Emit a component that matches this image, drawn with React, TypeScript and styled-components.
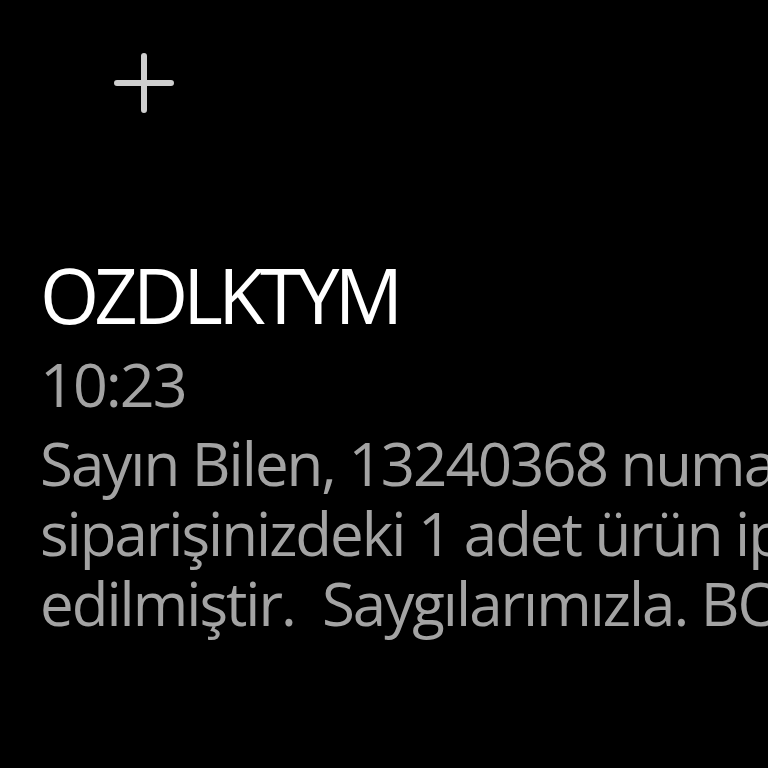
import React from "react";
import styled, { createGlobalStyle } from "styled-components";

const GlobalStyle = createGlobalStyle`
  html, body {
    margin: 0;
    padding: 0;
    background: #000;
  }
  body {
    font-family: "Open Sans", "Noto Sans", sans-serif;
  }
`;

const Screen = styled.div`
  width: 768px;
  height: 768px;
  background: #000;
  overflow: hidden;
  display: flex;
  flex-direction: column;
`;

const TopBar = styled.div`
  height: 166px;
  display: flex;
  align-items: center;
  padding-left: 112px;
`;

const AddButton = styled.button`
  width: 64px;
  height: 64px;
  padding: 0;
  border: none;
  background: transparent;
  display: flex;
  align-items: center;
  justify-content: center;
  color: #cfcfcf;
`;

const Body = styled.div`
  padding: 84px 0 0 40px;
  display: flex;
  flex-direction: column;
`;

const Sender = styled.div`
  color: #fff;
  font-size: 76px;
  font-weight: 500;
  line-height: 90px;
  letter-spacing: -4.8px;
  white-space: nowrap;
`;

const Time = styled.div`
  margin-top: 4px;
  color: #a3a3a3;
  font-size: 61px;
  font-weight: 500;
  line-height: 80px;
  letter-spacing: -2px;
`;

const Message = styled.div`
  margin-top: 4px;
  color: #a3a3a3;
  font-size: 60px;
  font-weight: 500;
  line-height: 70px;
  letter-spacing: -2px;
  white-space: pre;
`;

const lines = [
  "Sayın Bilen, 13240368 numaralı",
  "siparişinizdeki 1 adet ürün iptal",
  "edilmiştir.  Saygılarımızla. BOYNER",
];

export default function App() {
  return (
    <Screen>
      <GlobalStyle />
      <TopBar>
        <AddButton aria-label="Ekle">
          <svg width="60" height="60" viewBox="0 0 60 60" fill="none">
            <path
              d="M30 3v54M3 30h54"
              stroke="currentColor"
              strokeWidth="6"
              strokeLinecap="round"
            />
          </svg>
        </AddButton>
      </TopBar>
      <Body>
        <Sender>OZDLKTYM</Sender>
        <Time>10:23</Time>
        <Message>{lines.join("\n")}</Message>
      </Body>
    </Screen>
  );
}
